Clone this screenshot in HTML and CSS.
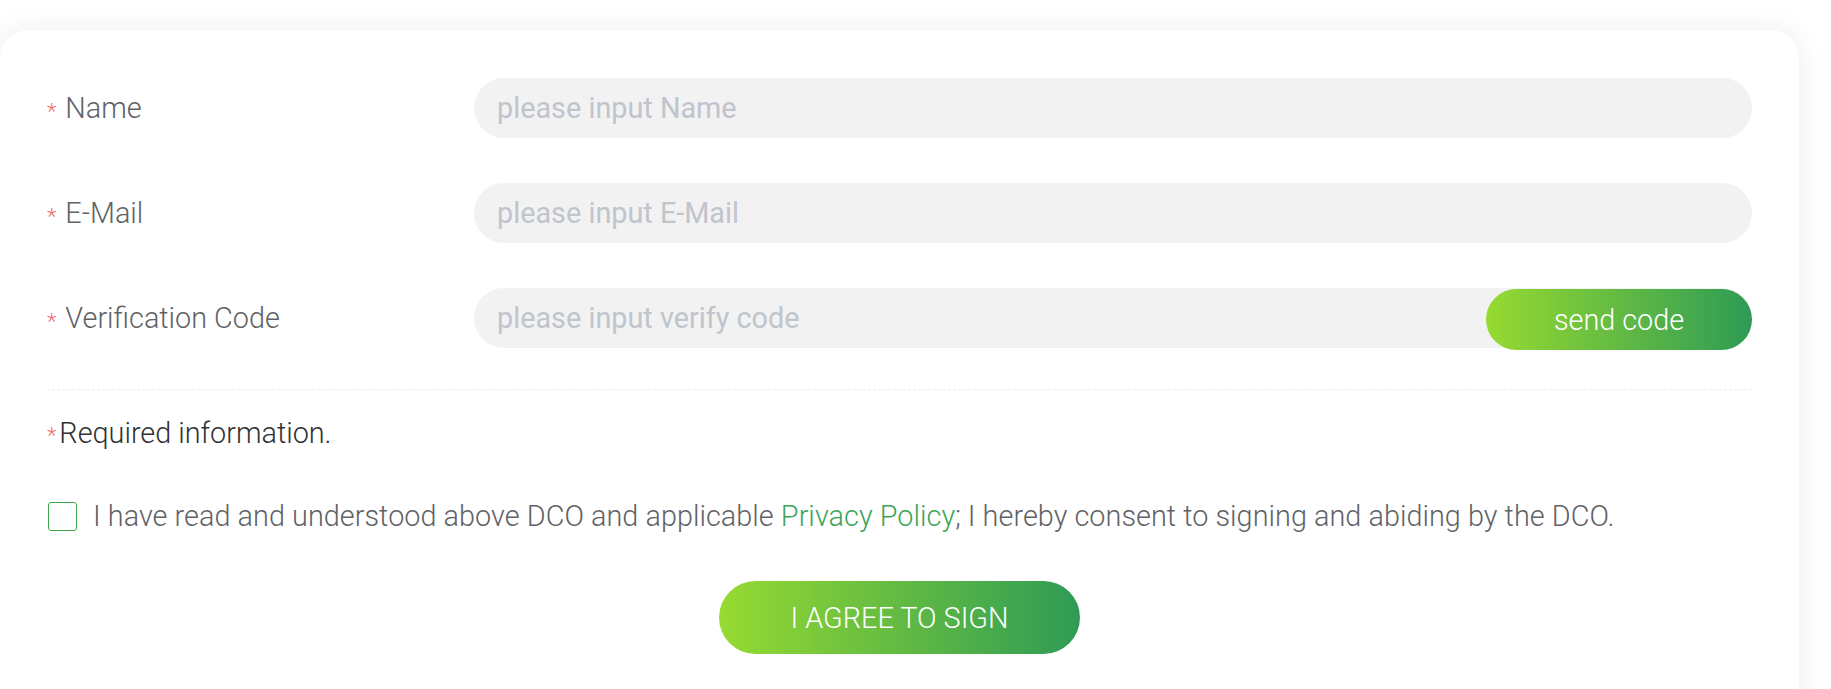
FILE: index.html
```html
<!DOCTYPE html>
<html lang="en">
<head>
<meta charset="utf-8">
<title>Sign DCO</title>
<link rel="stylesheet" href="styles.css">
</head>
<body>
<div class="card">
  <form class="form">
    <div class="row">
      <label class="label"><span class="star">*</span>Name</label>
      <div class="field"><input class="input" type="text" placeholder="please input Name"></div>
    </div>
    <div class="row">
      <label class="label"><span class="star">*</span>E-Mail</label>
      <div class="field"><input class="input" type="text" placeholder="please input E-Mail"></div>
    </div>
    <div class="row">
      <label class="label"><span class="star">*</span>Verification Code</label>
      <div class="field field-code">
        <input class="input" type="text" placeholder="please input verify code">
        <button type="button" class="send-btn">send code</button>
      </div>
    </div>
    <div class="divider"></div>
    <p class="required"><span class="star star-tight">*</span>Required information.</p>
    <div class="consent">
      <span class="checkbox"></span>
      <span class="consent-text">I have read and understood above DCO and applicable <a class="link" href="#">Privacy Policy</a>; I hereby consent to signing and abiding by the DCO.</span>
    </div>
    <div class="actions">
      <button type="button" class="sign-btn">I AGREE TO SIGN</button>
    </div>
  </form>
</div>
</body>
</html>
```

FILE: styles.css
```css
html, body {
  margin: 0;
  padding: 0;
  background: #ffffff;
  font-family: Roboto, "Liberation Sans", sans-serif;
  font-weight: 300;
}

body {
  padding-top: 30px;
  padding-right: 32px;
  overflow: hidden;
  height: 659px;
}

.card {
  background: #ffffff;
  border-radius: 28px;
  box-shadow: 0 0 30px rgba(0, 0, 0, 0.075);
  padding: 48px 47px 60px 47px;
  min-height: 700px;
  box-sizing: border-box;
}

.form {
  display: flex;
  flex-direction: column;
}

.row {
  display: flex;
  align-items: center;
  height: 60px;
  margin-bottom: 45px;
}

.row:nth-child(3) {
  margin-bottom: 41px;
}

.label {
  width: 427px;
  flex-shrink: 0;
  font-size: 28.8px;
  color: #606266;
  display: flex;
  align-items: center;
}

.star {
  color: #f56c6c;
  font-size: 22px;
  margin-right: 9px;
  position: relative;
  top: 3px;
}

.star-tight {
  margin-right: 3px;
}

.field {
  flex: 1;
  height: 60px;
  position: relative;
}

.input {
  width: 100%;
  height: 60px;
  box-sizing: border-box;
  border: none;
  outline: none;
  background: #f2f2f2;
  border-radius: 30px;
  padding: 0 23px;
  font-family: Roboto, "Liberation Sans", sans-serif;
  font-weight: 400;
  font-size: 28.8px;
  color: #606266;
}

.input::placeholder {
  color: #c0c4cc;
}

.send-btn {
  position: absolute;
  right: 0;
  top: 1px;
  width: 266px;
  height: 61px;
  border: none;
  border-radius: 31px;
  background: linear-gradient(90deg, #97da31 0%, #2e9b55 100%);
  color: #ffffff;
  font-family: Roboto, "Liberation Sans", sans-serif;
  font-weight: 300;
  font-size: 28.8px;
  cursor: pointer;
}

.divider {
  border-top: 1px dashed #ededed;
  height: 0;
}

.required {
  margin: 26px 0 0 0;
  font-size: 28.8px;
  line-height: 34px;
  color: #303133;
  display: flex;
  align-items: center;
}

.consent {
  display: flex;
  align-items: center;
  margin-top: 49px;
}

.checkbox {
  width: 27px;
  height: 27px;
  border: 1px solid #3eaa4c;
  border-radius: 3px;
  margin-left: 1px;
  margin-right: 16px;
  flex-shrink: 0;
}

.consent-text {
  font-size: 28.8px;
  color: #606266;
  line-height: 34px;
  letter-spacing: 0.04px;
}

.link {
  color: #3aa55b;
  text-decoration: none;
}

.actions {
  display: flex;
  justify-content: center;
  margin-top: 48px;
}

.sign-btn {
  width: 361px;
  height: 73px;
  border: none;
  border-radius: 37px;
  background: linear-gradient(90deg, #97da31 0%, #2e9b55 100%);
  color: #ffffff;
  font-family: Roboto, "Liberation Sans", sans-serif;
  font-weight: 300;
  font-size: 28.8px;
  cursor: pointer;
}
```
